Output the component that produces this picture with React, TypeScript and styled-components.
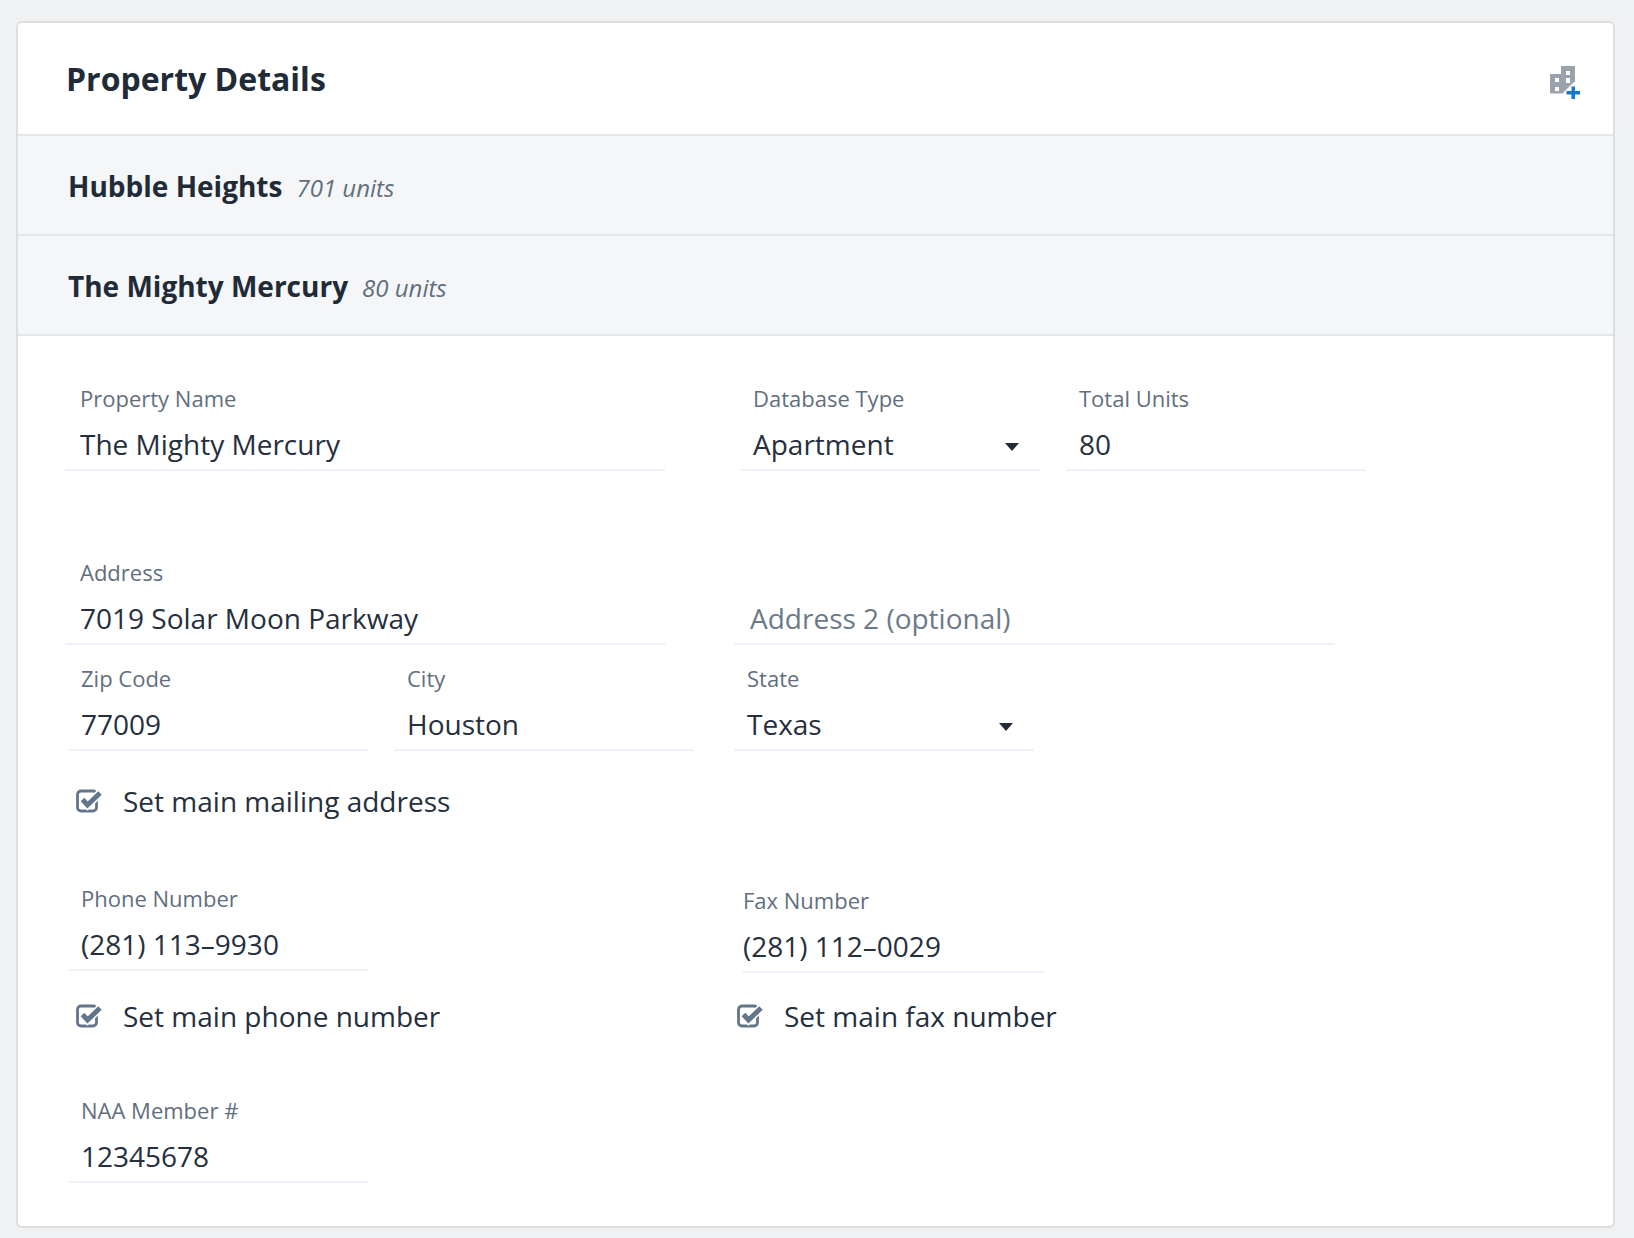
import React from "react";
import styled, { createGlobalStyle } from "styled-components";

const Global = createGlobalStyle`
  html, body { margin: 0; padding: 0; background: #f0f1f3; }
  body { font-family: "Open Sans", "Liberation Sans", sans-serif; color: #212b38; }
  * { box-sizing: border-box; }
`;

const Page = styled.div`
  height: 1238px;
  padding: 21px 19px 0 16px;
  overflow: hidden;
`;
const Card = styled.section`
  background: #fff;
  border: 2px solid #dcdee0;
  border-radius: 6px;
  height: 1207px;
  overflow: hidden;
`;
const Header = styled.header`
  height: 113px;
  display: flex;
  align-items: center;
  justify-content: space-between;
  padding: 0 31px 0 48px;
  border-bottom: 2px solid #e4e6e9;
`;
const Title = styled.h1`
  margin: 0;
  font-size: 32px;
  font-weight: 700;
  line-height: 40px;
`;
const AddIcon = styled.svg`
  width: 32px;
  height: 34px;
  display: block;
  margin-top: 9px;
`;
const Accordion = styled.div`
  height: 100px;
  display: flex;
  align-items: baseline;
  gap: 14px;
  padding: 31px 0 0 50px;
  background: #f5f6f8;
  border-bottom: 2px solid #e4e6e9;
`;
const PropName = styled.span`
  font-size: 28px;
  font-weight: 700;
  line-height: 38px;
`;
const Units = styled.span`
  font-size: 24px;
  font-style: italic;
  color: #5f6f80;
`;
const Form = styled.form`
  padding: 51px 0 0 47px;
`;
const Row = styled.div<{ $top?: number }>`
  display: flex;
  align-items: flex-start;
  margin-top: ${(p) => p.$top ?? 0}px;
`;
const Field = styled.div<{ $w: number; $ml?: number; $pad?: number; $drop?: number }>`
  width: ${(p) => p.$w}px;
  margin-left: ${(p) => p.$ml ?? 0}px;
  margin-top: ${(p) => p.$drop ?? 0}px;
  padding: 0 0 10px ${(p) => p.$pad ?? 13}px;
  border-bottom: 2px solid #f0f0fa;
  position: relative;
`;
const Label = styled.label`
  display: block;
  font-size: 22px;
  line-height: 22px;
  color: #5f6f80;
  margin-bottom: 20px;
`;
const Value = styled.div<{ $placeholder?: boolean }>`
  font-size: 28px;
  line-height: 30px;
  height: 30px;
  color: ${(p) => (p.$placeholder ? "#6b7a89" : "#252f3d")};
`;
const Caret = styled.span`
  position: absolute;
  right: 21px;
  top: 56px;
  width: 0;
  height: 0;
  border-left: 7.5px solid transparent;
  border-right: 7.5px solid transparent;
  border-top: 8px solid #212b38;
`;
const Check = styled.div<{ $w?: number; $ml?: number }>`
  display: flex;
  align-items: center;
  height: 30px;
  margin-left: ${(p) => p.$ml ?? 0}px;
  width: ${(p) => p.$w ?? "auto"}px;
  font-size: 28px;
  color: #252f3d;
  gap: 20px;
`;
const CheckIcon = styled.svg`
  width: 27px;
  height: 24px;
  display: block;
  flex: none;
`;

const CheckMark = () => (
  <CheckIcon viewBox="0 0 27 24" aria-hidden>
    <rect x="1.500" y="2" width="19" height="20" rx="3.500" fill="none" stroke="#63758a" strokeWidth="2.800" />
    <path d="M6.500 10.500l5 5.500L24 4" fill="none" stroke="#fff" strokeWidth="8" />
    <path d="M6.500 10.500l5 5.500L24 4" fill="none" stroke="#63758a" strokeWidth="5" />
  </CheckIcon>
);

export default function App() {
  return (
    <Page>
      <Global />
      <Card>
        <Header>
          <Title>Property Details</Title>
          <AddIcon viewBox="0 0 32 34" aria-hidden>
            <path d="M0 8h11V0h14v16l-8 8-3 3.500H0z" fill="#9aa3ad" />
            <path d="M16 5h4v4h-4zM16 12h4v5h-4zM5 12h4v4H5zM5 21h4v4H5z" fill="#fff" />
            <path d="M14 28l11-11" stroke="#fff" strokeWidth="3" />
            <path d="M21.500 20.500h3.500V25h5v3.500h-5V33h-3.500v-4.500h-5V25h5z" fill="#1479cc" />
          </AddIcon>
        </Header>
        <Accordion>
          <PropName>Hubble Heights</PropName>
          <Units>701 units</Units>
        </Accordion>
        <Accordion>
          <PropName>The Mighty Mercury</PropName>
          <Units>80 units</Units>
        </Accordion>
        <Form>
          <Row>
            <Field $w={600} $pad={15}>
              <Label>Property Name</Label>
              <Value>The Mighty Mercury</Value>
            </Field>
            <Field $w={300} $ml={75}>
              <Label>Database Type</Label>
              <Value>Apartment</Value>
              <Caret />
            </Field>
            <Field $w={300} $ml={26}>
              <Label>Total Units</Label>
              <Value>80</Value>
            </Field>
          </Row>
          <Row $top={90}>
            <Field $w={600} $pad={15}>
              <Label>Address</Label>
              <Value>7019 Solar Moon Parkway</Value>
            </Field>
            <Field $w={601} $ml={69} $pad={16}>
              <Label>&nbsp;</Label>
              <Value $placeholder>Address 2 (optional)</Value>
            </Field>
          </Row>
          <Row $top={22}>
            <Field $w={300} $ml={3}>
              <Label>Zip Code</Label>
              <Value>77009</Value>
            </Field>
            <Field $w={300} $ml={26}>
              <Label>City</Label>
              <Value>Houston</Value>
            </Field>
            <Field $w={300} $ml={40}>
              <Label>State</Label>
              <Value>Texas</Value>
              <Caret />
            </Field>
          </Row>
          <Row $top={35}>
            <Check $ml={11}>
              <CheckMark />
              Set main mailing address
            </Check>
          </Row>
          <Row $top={71}>
            <Field $w={300} $ml={3}>
              <Label>Phone Number</Label>
              <Value>(281) 113–9930</Value>
            </Field>
            <Field $w={301} $ml={375} $pad={0} $drop={2}>
              <Label>Fax Number</Label>
              <Value>(281) 112–0029</Value>
            </Field>
          </Row>
          <Row $top={28}>
            <Check $w={661} $ml={11}>
              <CheckMark />
              Set main phone number
            </Check>
            <Check>
              <CheckMark />
              Set main fax number
            </Check>
          </Row>
          <Row $top={68}>
            <Field $w={300} $ml={3}>
              <Label>NAA Member #</Label>
              <Value>12345678</Value>
            </Field>
          </Row>
        </Form>
      </Card>
    </Page>
  );
}
